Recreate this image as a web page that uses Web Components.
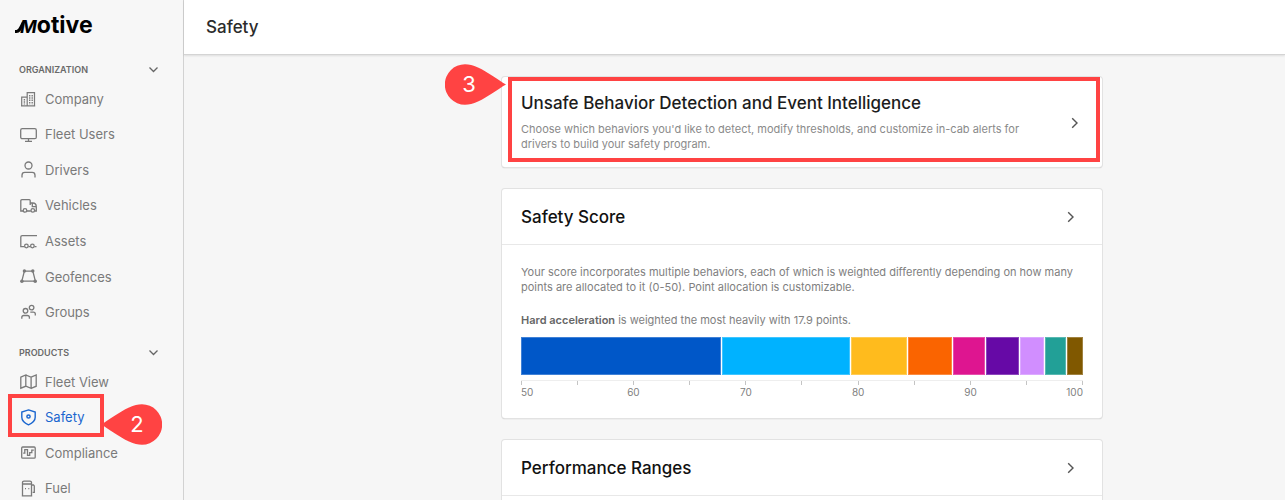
<!DOCTYPE html>
<html lang="en">
<head>
<meta charset="utf-8">
<meta name="viewport" content="width=device-width, initial-scale=1">
<title>Safety</title>
<style>
  body { margin: 0; font-family: Inter, "Liberation Sans", sans-serif; overflow: hidden; background: #f6f6f6; }
</style>
</head>
<body>
<motive-app>
  <motive-sidebar slot="side">
    <nav-group label="Organization">
      <nav-item icon="company">Company</nav-item>
      <nav-item icon="monitor">Fleet Users</nav-item>
      <nav-item icon="driver">Drivers</nav-item>
      <nav-item icon="truck">Vehicles</nav-item>
      <nav-item icon="asset">Assets</nav-item>
      <nav-item icon="fence">Geofences</nav-item>
      <nav-item icon="groups">Groups</nav-item>
    </nav-group>
    <nav-group label="Products">
      <nav-item icon="map">Fleet View</nav-item>
      <nav-item icon="shield" current>Safety<call-out slot="mark" number="2" side="right"></call-out></nav-item>
      <nav-item icon="compliance">Compliance</nav-item>
      <nav-item icon="fuel">Fuel</nav-item>
    </nav-group>
  </motive-sidebar>
  <page-header slot="head">Safety</page-header>
  <link-card>
    <call-out slot="mark" number="3" side="left"></call-out>
    <span slot="title">Unsafe Behavior Detection and Event Intelligence</span>
    Choose which behaviors you'd like to detect, modify thresholds, and customize in-cab alerts for drivers to build your safety program.
  </link-card>
  <section-card heading="Safety Score">
    <score-chart></score-chart>
  </section-card>
  <section-card heading="Performance Ranges"></section-card>
</motive-app>

<script>
const define = (name, html, setup) => customElements.define(name, class extends HTMLElement {
  connectedCallback() {
    if (this.shadowRoot) return;
    const root = this.attachShadow({ mode: 'open' });
    root.innerHTML = html;
    if (setup) setup(this, root);
  }
});

const CHEVRON_RIGHT = '<svg width="8" height="12" viewBox="0 0 8 12" fill="none" stroke="#555" stroke-width="1.4" aria-hidden="true"><path d="M1.2 1.2 6 6l-4.800 4.800"/></svg>';

const ICONS = {
  company: '<g stroke-width="1.200"><path d="M1.700 16V7.200h5.300M7.200 16V2.600h7.300V16M1 15.900h14.200"/></g><g stroke-width="1.400" stroke-dasharray="1.500 .8"><path d="M4.400 9v5.500M9.700 5v9.500M12.200 5v9.500"/></g>',
  monitor: '<rect x=".7" y="2.700" width="15.600" height="10" rx="1.500"/><path d="M8.500 12.700v2.500M5 15.400h7"/>',
  driver: '<circle cx="8.500" cy="4.500" r="3.500"/><path d="M2 16.500v-2.300c0-1.600 1.200-2.800 2.800-2.800h7.400c1.600 0 2.800 1.200 2.800 2.800v2.300"/>',
  truck: '<path d="M3 14H.8V3.700c0-.7.4-1.100 1.100-1.100h7.300c.6 0 1 .4 1 1V8M7 14h3.800M10.200 6h2.600c2.200 0 3.500 1.800 3.500 4v4h-1.500"/><circle cx="5" cy="13.400" r="1.800"/><circle cx="12.800" cy="13.400" r="1.800"/><path d="M12.300 6v3.600h3.700"/>',
  asset: '<path d="M17 2.600H2.200C1.300 2.600.8 3.100.8 4v9.600h3.600M14.500 13.600h2"/><circle cx="6.400" cy="13" r="1.800"/><circle cx="12.400" cy="13" r="1.800"/><path d="M8.400 13.600h2"/>',
  fence: '<path d="M4.500 3.200h8.200M4.300 3.400 1.900 12.800M12.900 3.400l2.400 9.400M1.900 13.100h13.400"/><g fill="currentColor" stroke="none"><circle cx="4.400" cy="3" r="1.700"/><circle cx="12.800" cy="3" r="1.700"/><circle cx="1.900" cy="13.200" r="1.800"/><circle cx="15.200" cy="13.200" r="1.800"/></g>',
  groups: '<circle cx="5.500" cy="6.800" r="2.300"/><circle cx="11.600" cy="3.600" r="2.300"/><path d="M1.800 14.700v-1.200c0-1.300.8-2 2-2h3.600c1.200 0 2 .7 2 2v1.200M10.300 8.100h3c1.200 0 2 .7 2 2v1.300"/>',
  map: '<path d="M.8 4.200 5.800 2v11.200L.8 15.200zM5.800 2l5.300 2.200v11.200l-5.300-2.200M11.100 4.200 16.200 2v11.200l-5.100 2.200"/>',
  shield: '<path stroke-width="1.400" d="M8.500.9 15.200 3v5.300c0 3.700-2.700 5.800-6.700 7.500C4.500 14.100 1.800 12 1.800 8.300V3z"/><circle cx="8.500" cy="7.500" r="1.600" stroke-width="1.500"/>',
  compliance: '<rect x="1.700" y="3" width="13.500" height="11.200" rx="1"/><path d="M3.200 9.200h1.600V5.600h2.700v5.700h2.200V8.600h2.100V6.200h2"/>',
  fuel: '<path d="M2.500 15.800V2.600c0-.9.6-1.500 1.500-1.500h6c.9 0 1.500.6 1.500 1.500v13.200zM1.800 15.800h10.400M2.500 4h9M11.500 5h2l.8.900v6.400h-1.600M5 8.600h1M8.300 8.600h1"/>'
};

define('motive-app', `
<style>
  :host { display: grid; grid-template-columns: 184px minmax(0, 1fr); height: 100vh; overflow: hidden; }
  .page { display: flex; flex-direction: column; min-width: 0; }
  main { display: grid; grid-template-columns: minmax(24px, 318fr) minmax(0, 600px) minmax(24px, 183fr); padding-top: 22px; }
  .cards { grid-column: 2; display: flex; flex-direction: column; gap: 22px; }
</style>
<slot name="side"></slot>
<div class="page">
  <slot name="head"></slot>
  <main><div class="cards"><slot></slot></div></main>
</div>`);

define('motive-sidebar', `
<style>
  :host { display: block; min-width: 0; border-right: 1px solid #d2d2d2; background: #f7f7f7; }
  .logo { display: flex; align-items: baseline; height: 30px; padding: 10px 0 18px 15px; color: #000; text-decoration: none; font-size: 23px; font-weight: 700; line-height: 30px; }
  .logo svg { margin-right: -4px; }
  .logo i { font-size: 18px; font-weight: 700; }
  nav { display: flex; flex-direction: column; gap: 11px; }
</style>
<a class="logo" href="#" aria-label="Motive"><svg width="9" height="13" viewBox="0 0 9 13" aria-hidden="true"><path d="M0 11.500h1.500C4.500 11.500 5 9 8.500 2" fill="none" stroke="#000" stroke-width="3"/></svg><i>M</i>otive</a>
<nav aria-label="Main"><slot></slot></nav>`);

define('nav-group', `
<style>
  :host { display: block; }
  button { display: flex; align-items: center; justify-content: space-between; width: 100%; height: 23px; padding: 0 24px 0 19px; border: 0; background: none; color: #6a6a6a; font: 600 9px/22px Inter, "Liberation Sans", sans-serif; text-transform: uppercase; text-align: left; }
  .items { display: grid; grid-auto-rows: 1fr; }
</style>
<button type="button" aria-expanded="true"><span></span><svg width="11" height="8" viewBox="0 0 11 8" fill="none" stroke="#666" stroke-width="1.300" aria-hidden="true"><path d="M1.500 1.500 5.500 5.500l4-4"/></svg></button>
<div class="items" role="list"><slot></slot></div>`, (el, root) => {
  root.querySelector('span').textContent = el.getAttribute('label');
  root.querySelector('.items').style.height = Math.round(el.children.length * 35.5) + 'px';
});

define('nav-item', `
<style>
  :host { display: flex; position: relative; padding-left: 20px; color: #7a7a7a; }
  :host([current]) { color: #1a66cf; }
  a { display: flex; align-items: center; gap: 8px; color: inherit; text-decoration: none; font-size: 13px; line-height: 20px; }
  svg { flex: none; }
</style>
<a href="#"><svg width="17" height="17" viewBox="0 0 17 17" fill="none" stroke="currentColor" stroke-width="1.300" aria-hidden="true"></svg><span><slot></slot></span></a><slot name="mark"></slot>`, (el, root) => {
  el.setAttribute('role', 'listitem');
  root.querySelector('svg').innerHTML = ICONS[el.getAttribute('icon')];
  if (el.hasAttribute('current')) root.querySelector('a').setAttribute('aria-current', 'page');
});

define('page-header', `
<style>
  :host { display: flex; align-items: center; height: 54px; padding-left: 22px; background: #fff; border-bottom: 1px solid #d4d4d4; box-shadow: 0 1px 2px #0000001a; }
  h1 { margin: 0; color: #2b2b2b; font-size: 17px; font-weight: 500; line-height: 24px; }
</style>
<h1><slot></slot></h1>`);

const CARD = ':host { display: block; position: relative; background: #fff; border-radius: 3px; box-shadow: 0 0 0 1px #e2e2e2, 0 1px 1px #a8a8a8; }';

define('link-card', `
<style>
  ${CARD}
  a { display: flex; align-items: center; justify-content: space-between; padding: 16px 23px 15px 19px; color: #8a8a8a; text-decoration: none; }
  h2 { margin: 0 0 9px; color: #1c1c1c; font-size: 17px; font-weight: 500; line-height: 20px; }
  p { margin: 0; max-width: 512px; font-size: 11px; line-height: 15px; }
</style>
<a href="#"><div><h2><slot name="title"></slot></h2><p><slot></slot></p></div>${CHEVRON_RIGHT}</a>
<slot name="mark"></slot>`);

define('section-card', `
<style>
  ${CARD}
  a { display: flex; align-items: center; justify-content: space-between; height: 55px; padding: 0 27px 0 19px; border-bottom: 1px solid #e8e8e8; color: #111; text-decoration: none; }
  h2 { margin: 0; font-size: 17px; font-weight: 500; line-height: 20px; }
  .body { padding: 20px 19px 18px; }
</style>
<a href="#"><h2></h2>${CHEVRON_RIGHT}</a>
<div class="body"><slot></slot></div>`, (el, root) => {
  root.querySelector('h2').textContent = el.getAttribute('heading');
});

define('score-chart', `
<style>
  :host { display: block; color: #808080; font-size: 11px; line-height: 15px; }
  p { margin: 0 0 18px; }
  .lead { margin-bottom: 9px; }
  b { font-weight: 600; color: #666; }
  .bar { display: grid; height: 38px; margin-bottom: 5px; }
  .bar i { min-width: 0; border-right: 1px solid #fff; background-clip: padding-box; box-shadow: inset 0 0 0 1px #ffffff40; }
  .bar i:last-child { border-right: 0; }
  .ticks { display: flex; justify-content: space-between; height: 4px; border-top: 1px solid #eee; }
  .ticks i { width: 1px; background: #c4c4c4; }
  .labels { display: flex; justify-content: space-between; font-size: 10px; line-height: 15px; }
  .labels span { display: flex; justify-content: center; width: 0; }
  .labels span:first-child { justify-content: flex-start; }
  .labels span:last-child { justify-content: flex-end; }
</style>
<p>Your score incorporates multiple behaviors, each of which is weighted differently depending on how many points are allocated to it (0-50). Point allocation is customizable.</p>
<p class="lead"><b>Hard acceleration</b> is weighted the most heavily with 17.9 points.</p>
<div class="bar" role="img" aria-label="Points per behavior"></div>
<div class="ticks"></div>
<div class="labels"><span>50</span><span>60</span><span>70</span><span>80</span><span>90</span><span>100</span></div>`, (el, root) => {
  const parts = [[17.9, '#0057c8'], [11.5, '#00b2ff'], [5, '#ffbb1d'], [4, '#fa6400'], [3, '#de1590'], [3, '#6609a6'], [2.2, '#d18eff'], [2, '#22a097'], [1.4, '#805800']];
  const bar = root.querySelector('.bar');
  bar.style.gridTemplateColumns = parts.map(p => p[0] + 'fr').join(' ');
  bar.innerHTML = parts.map(p => `<i style="background-color:${p[1]}"></i>`).join('');
  root.querySelector('.ticks').innerHTML = '<i></i>'.repeat(11);
});

define('call-out', `
<style>
  :host { position: absolute; z-index: 1; box-sizing: border-box; border: 4px solid #ff4343; pointer-events: none; }
  :host([side="right"]) { inset: -6px auto auto 8px; width: 96px; height: 43px; }
  :host([side="left"]) { inset: 0 2px 5px 6px; }
  .pin { position: absolute; width: 61px; height: 41px; color: #fff; }
  :host([side="right"]) .pin { left: 89px; top: 6px; }
  :host([side="left"]) .pin { left: -67px; top: -17px; }
  svg { position: absolute; inset: 0; }
  :host([side="left"]) svg { transform: scaleX(-1); }
  span { position: absolute; top: 0; width: 48px; text-align: center; font-size: 22px; line-height: 41px; }
  :host([side="right"]) span { left: 12px; }
  :host([side="left"]) span { left: 0; }
</style>
<div class="pin"><svg width="61" height="41" viewBox="0 0 61 41" aria-hidden="true"><path fill="#ff4343" d="M0 20.500C8 16 18 8 28 3.500 33 1 37 .3 41 .3a20.200 20.200 0 0 1 0 40.400C37 40.700 33 40 28 37.500 18 33 8 25 0 20.500z"/></svg><span></span></div>`, (el, root) => {
  root.querySelector('span').textContent = el.getAttribute('number');
});
</script>
</body>
</html>
